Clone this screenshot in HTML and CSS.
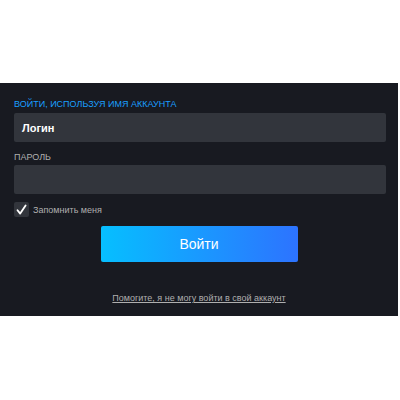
FILE: index.html
```
<!DOCTYPE html>
<html lang="ru">
<head>
<meta charset="utf-8">
<link rel="stylesheet" href="styles.css">
</head>
<body>
<div class="panel">
  <div class="label label-accent">Войти, используя имя аккаунта</div>
  <div class="input"><span class="input-text">Логин</span></div>
  <div class="label label-pass">Пароль</div>
  <div class="input"></div>
  <div class="remember">
    <span class="checkbox">
      <svg width="15" height="15" viewBox="0 0 15 15"><path d="M3.5 8.2 L6.2 11.6 L11.6 3.4" fill="none" stroke="#ffffff" stroke-width="1.8" stroke-linecap="round" stroke-linejoin="round"/></svg>
    </span>
    <span class="remember-text">Запомнить меня</span>
  </div>
  <div class="btn-row"><div class="btn">Войти</div></div>
  <div class="help"><span class="help-link">Помогите, я не могу войти в свой аккаунт</span></div>
</div>
</body>
</html>
```
FILE: styles.css
```
html, body {
  margin: 0;
  padding: 0;
  background: #ffffff;
}
body {
  font-family: "Liberation Sans", Arial, sans-serif;
}
.panel {
  margin-top: 83px;
  width: 398px;
  height: 233px;
  box-sizing: border-box;
  background: #181a21;
  padding: 15px 12px 0 14px;
  display: flex;
  flex-direction: column;
}
.label {
  font-size: 9px;
  line-height: 12px;
  height: 12px;
  text-transform: uppercase;
  color: #afafaf;
}
.label-accent {
  color: #1a9fff;
  margin-bottom: 3px;
}
.label-pass {
  margin-top: 9px;
  margin-bottom: 2px;
}
.input {
  height: 29px;
  background: #32353c;
  border-radius: 2px;
  display: flex;
  align-items: center;
  padding-left: 8px;
}
.input-text {
  color: #ffffff;
  font-size: 11px;
  font-weight: bold;
  letter-spacing: 0;
}
.remember {
  margin-top: 8px;
  height: 15px;
  display: flex;
  align-items: center;
  gap: 4px;
}
.checkbox {
  width: 15px;
  height: 15px;
  background: #32353c;
  border-radius: 2px;
  display: block;
}
.checkbox svg {
  display: block;
}
.remember-text {
  font-size: 9px;
  color: #afafaf;
}
.btn-row {
  margin-top: 9px;
  display: flex;
  justify-content: center;
  padding-right: 2px;
}
.btn {
  width: 197px;
  height: 36px;
  background: linear-gradient(90deg, #06bfff 0%, #2d73ff 100%);
  border-radius: 2px;
  color: #ffffff;
  font-size: 14px;
  display: flex;
  align-items: center;
  justify-content: center;
}
.help {
  margin-top: 30px;
  text-align: center;
  font-size: 9px;
  line-height: 12px;
  padding-right: 2px;
}
.help-link {
  color: #afafaf;
  text-decoration: underline;
}
```
